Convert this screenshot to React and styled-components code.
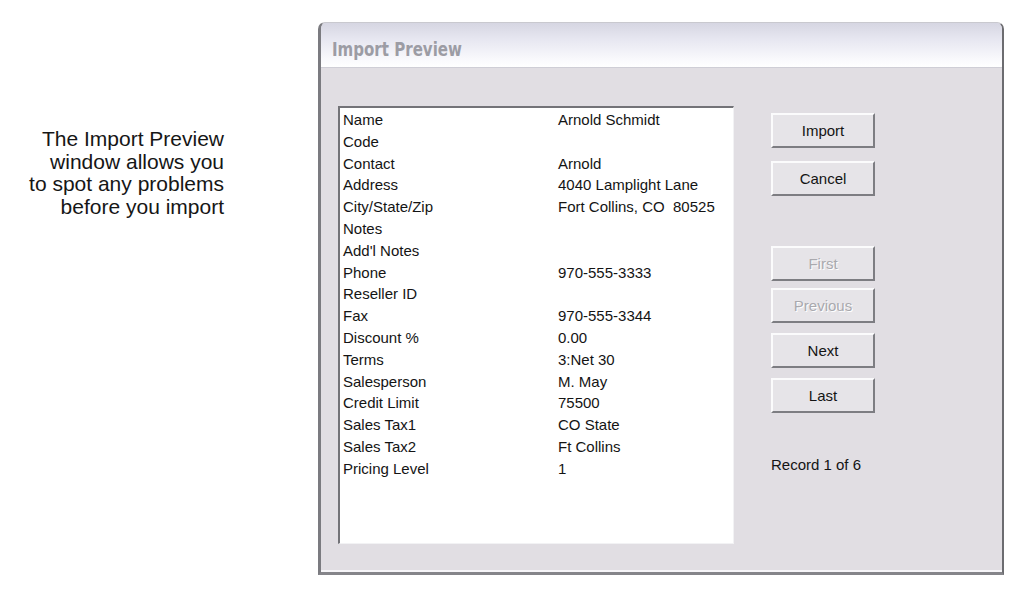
import React from 'react'
import styled, { createGlobalStyle } from 'styled-components'

const GlobalStyle = createGlobalStyle`
    html, body {
        margin: 0;
        padding: 0;
        background: #ffffff;
    }
    body {
        font-family: "Liberation Sans", Arial, sans-serif;
    }
`

const Page = styled.div`
    box-sizing: border-box;
    width: 1024px;
    height: 601px;
    padding-top: 22px;
    display: flex;
    align-items: flex-start;
    overflow: hidden;
`

const Caption = styled.p`
    box-sizing: border-box;
    width: 224px;
    margin: 106px 0 0 0;
    text-align: right;
    font-size: 21px;
    line-height: 22.5px;
    color: #161616;
`

const Window = styled.div`
    box-sizing: border-box;
    margin-left: 94px;
    width: 686px;
    height: 553px;
    border-left: 3px solid #7b7b80;
    border-right: 2px solid #6c6c70;
    border-bottom: 3px solid #85858a;
    border-top: 1px solid #c9c9cf;
    border-radius: 7px 7px 0 0;
    background: #e1dee3;
    display: grid;
    grid-template-rows: 45px 1fr;
    overflow: hidden;
    box-shadow: inset 0 -2px 0 #f6f5f8;
`

const TitleBar = styled.div`
    box-sizing: border-box;
    display: flex;
    align-items: center;
    padding: 8px 0 0 11px;
    background: linear-gradient(to bottom, #d6d6e2 0%, #e6e6f0 35%, #fafafd 85%, #ffffff 100%);
    border-bottom: 1px solid #cfced6;
`

const TitleText = styled.span`
    display: inline-block;
    font-family: "DejaVu Sans Condensed", "DejaVu Sans", sans-serif;
    font-weight: bold;
    font-size: 19px;
    color: #9c9ca4;
    transform: scaleX(0.88);
    transform-origin: left center;
`

const Body = styled.div`
    display: flex;
    align-items: flex-start;
    padding: 38px 0 0 17px;
`

const ListBox = styled.div`
    box-sizing: border-box;
    width: 396px;
    height: 438px;
    background: #ffffff;
    border-top: 2px solid #737378;
    border-left: 2px solid #737378;
    border-right: 1px solid #f2f2f4;
    border-bottom: 1px solid #f2f2f4;
    padding: 1px 0 0 3px;
`

const Row = styled.div`
    display: grid;
    grid-template-columns: 215px 1fr;
    height: 21.8px;
    line-height: 21.8px;
    font-size: 15px;
    color: #141414;
    white-space: pre;
`

const Side = styled.div`
    display: flex;
    flex-direction: column;
    margin-left: 37px;
    padding-top: 7px;
    width: 104px;
`

const Button = styled.div`
    box-sizing: border-box;
    width: 104px;
    height: 35px;
    margin-top: ${p => p.gap || 0}px;
    display: flex;
    align-items: center;
    justify-content: center;
    background: #e6e4e8;
    border-top: 2px solid #fbfbfc;
    border-left: 2px solid #fbfbfc;
    border-right: 2px solid #7d7d82;
    border-bottom: 2px solid #7d7d82;
    font-size: 15px;
    color: ${p => (p.disabled ? '#a9a9ae' : '#141414')};
    text-shadow: ${p => (p.disabled ? '1px 1px 0 #ffffff' : 'none')};
`

const Status = styled.div`
    margin-top: 43px;
    font-size: 15px;
    color: #141414;
`

const fields = [
    ['Name', 'Arnold Schmidt'],
    ['Code', ''],
    ['Contact', 'Arnold'],
    ['Address', '4040 Lamplight Lane'],
    ['City/State/Zip', 'Fort Collins, CO  80525'],
    ['Notes', ''],
    ["Add'l Notes", ''],
    ['Phone', '970-555-3333'],
    ['Reseller ID', ''],
    ['Fax', '970-555-3344'],
    ['Discount %', '0.00'],
    ['Terms', '3:Net 30'],
    ['Salesperson', 'M. May'],
    ['Credit Limit', '75500'],
    ['Sales Tax1', 'CO State'],
    ['Sales Tax2', 'Ft Collins'],
    ['Pricing Level', '1'],
]

export default function App() {
    return (
        <Page>
            <GlobalStyle />
            <Caption>
                The Import Preview<br />
                window allows you<br />
                to spot any problems<br />
                before you import
            </Caption>
            <Window>
                <TitleBar>
                    <TitleText>Import Preview</TitleText>
                </TitleBar>
                <Body>
                    <ListBox>
                        {fields.map(([label, value]) => (
                            <Row key={label}>
                                <span>{label}</span>
                                <span>{value}</span>
                            </Row>
                        ))}
                    </ListBox>
                    <Side>
                        <Button>Import</Button>
                        <Button gap={13}>Cancel</Button>
                        <Button gap={50} disabled>First</Button>
                        <Button gap={7} disabled>Previous</Button>
                        <Button gap={10}>Next</Button>
                        <Button gap={10}>Last</Button>
                        <Status>Record 1 of 6</Status>
                    </Side>
                </Body>
            </Window>
        </Page>
    )
}
